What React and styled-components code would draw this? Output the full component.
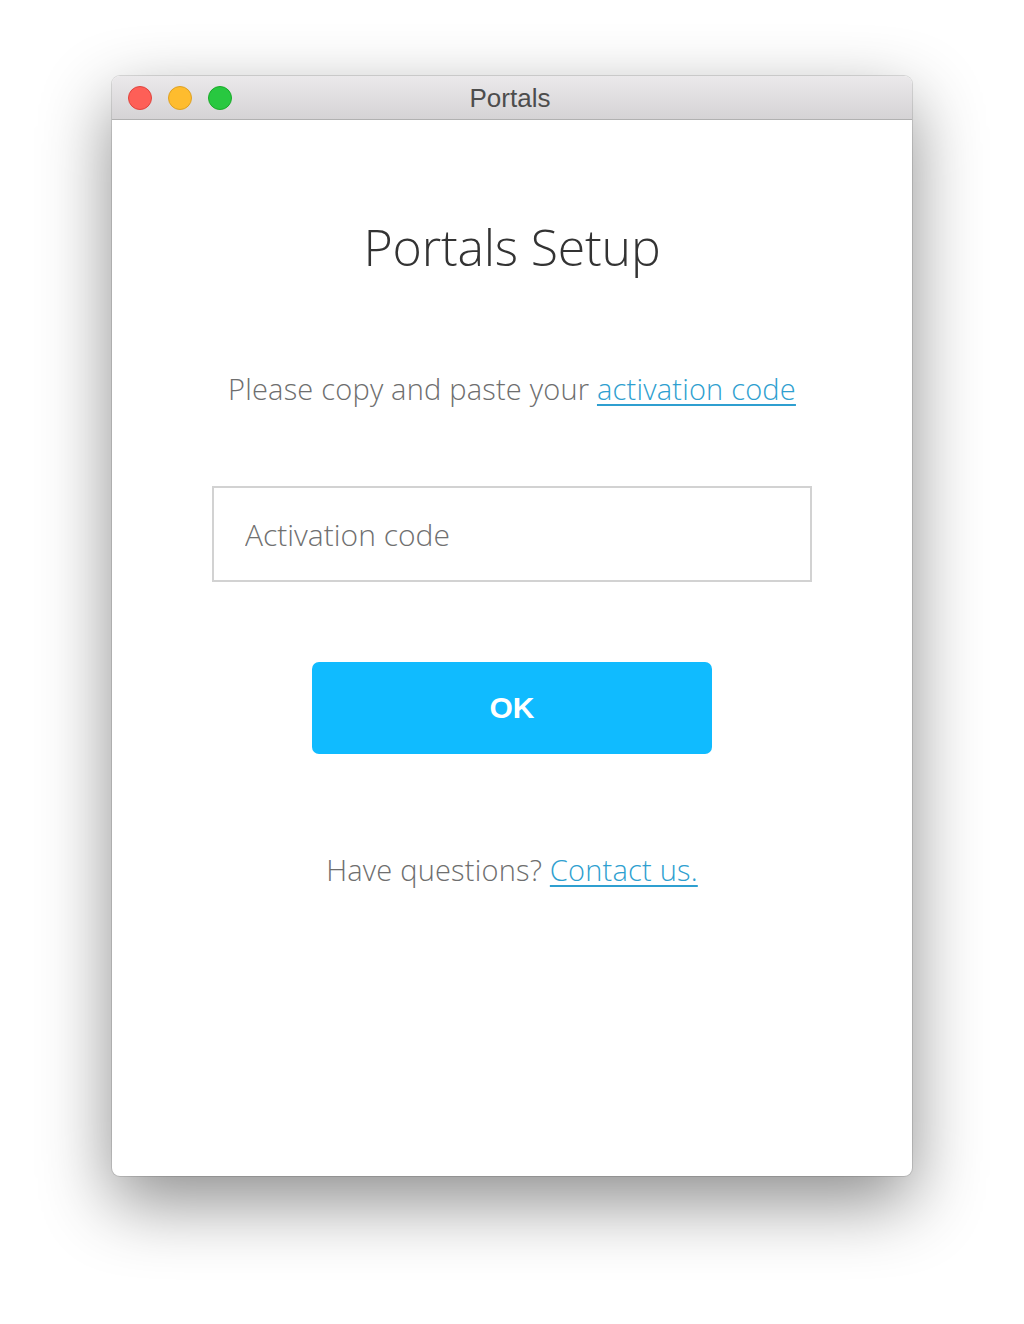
import React from "react";
import styled, { createGlobalStyle } from "styled-components";

const GlobalStyle = createGlobalStyle`
  html, body {
    margin: 0;
    padding: 0;
    background: #ffffff;
  }
  body {
    font-family: "Open Sans", "Liberation Sans", sans-serif;
  }
`;

export default function App() {
  return (
    <Page>
      <GlobalStyle />
      <Window>
        <TitleBar>
          <Lights>
            <Light color="#fe5f57" edge="#e0443e" />
            <Light color="#febc2e" edge="#dea123" />
            <Light color="#28c840" edge="#1aab29" />
          </Lights>
          <WindowTitle>Portals</WindowTitle>
        </TitleBar>
        <Content>
          <Heading>Portals Setup</Heading>
          <Lead>
            Please copy and paste your <Link href="#">activation code</Link>
          </Lead>
          <CodeInput placeholder="Activation code" />
          <OkButton>OK</OkButton>
          <Footer>
            Have questions? <Link href="#">Contact us.</Link>
          </Footer>
        </Content>
      </Window>
    </Page>
  );
}

const Page = styled.div`
  display: flex;
  justify-content: center;
  padding-top: 76px;
  height: 1324px;
  box-sizing: border-box;
`;

const Window = styled.div`
  width: 800px;
  height: 1100px;
  border-radius: 8px;
  background: #fff;
  overflow: hidden;
  display: flex;
  flex-direction: column;
  box-shadow: 0 0 0 1px rgba(0, 0, 0, 0.12), 0 26px 70px rgba(0, 0, 0, 0.45);
`;

const TitleBar = styled.div`
  position: relative;
  height: 43px;
  flex-shrink: 0;
  display: flex;
  align-items: center;
  justify-content: center;
  background: linear-gradient(#ebe9eb, #d5d3d5);
  border-bottom: 1px solid #b1b1b1;
`;

const Lights = styled.div`
  position: absolute;
  left: 16px;
  top: 10px;
  display: flex;
  gap: 16px;
`;

const Light = styled.span`
  width: 22px;
  height: 22px;
  border-radius: 50%;
  background: ${p => p.color};
  border: 1px solid ${p => p.edge};
`;

const WindowTitle = styled.div`
  font-family: "Liberation Sans", Arial, sans-serif;
  font-size: 26px;
  color: #4d4d4d;
  margin-left: -4px;
  margin-top: 2px;
`;

const Content = styled.div`
  display: flex;
  flex-direction: column;
  align-items: center;
  padding-top: 92px;
`;

const Heading = styled.h1`
  margin: 0;
  font-weight: 300;
  font-size: 50px;
  line-height: 70px;
  color: #333333;
  letter-spacing: -0.2px;
`;

const Lead = styled.p`
  margin: 87px 0 0;
  font-weight: 300;
  font-size: 29px;
  line-height: 40px;
  color: #6e6e6e;
  letter-spacing: 0.2px;
`;

const Link = styled.a`
  color: #2f9fd0;
  text-decoration: underline;
  text-decoration-thickness: 2px;
  text-underline-offset: 4px;
`;

const CodeInput = styled.input`
  margin-top: 77px;
  width: 600px;
  height: 96px;
  box-sizing: border-box;
  border: 2px solid #d2d2d2;
  padding: 0 31px;
  font-family: "Open Sans", sans-serif;
  font-weight: 300;
  font-size: 30px;
  color: #333;
  outline: none;
  &::placeholder {
    color: #707070;
  }
`;

const OkButton = styled.button`
  margin-top: 80px;
  width: 400px;
  height: 92px;
  border: none;
  border-radius: 7px;
  background: #10bbff;
  color: #ffffff;
  font-family: "Liberation Sans", Arial, sans-serif;
  font-weight: 700;
  font-size: 30px;
  cursor: pointer;
`;

const Footer = styled.p`
  margin: 96px 0 0;
  font-weight: 300;
  font-size: 29px;
  line-height: 40px;
  color: #6e6e6e;
  letter-spacing: 0.2px;
`;
